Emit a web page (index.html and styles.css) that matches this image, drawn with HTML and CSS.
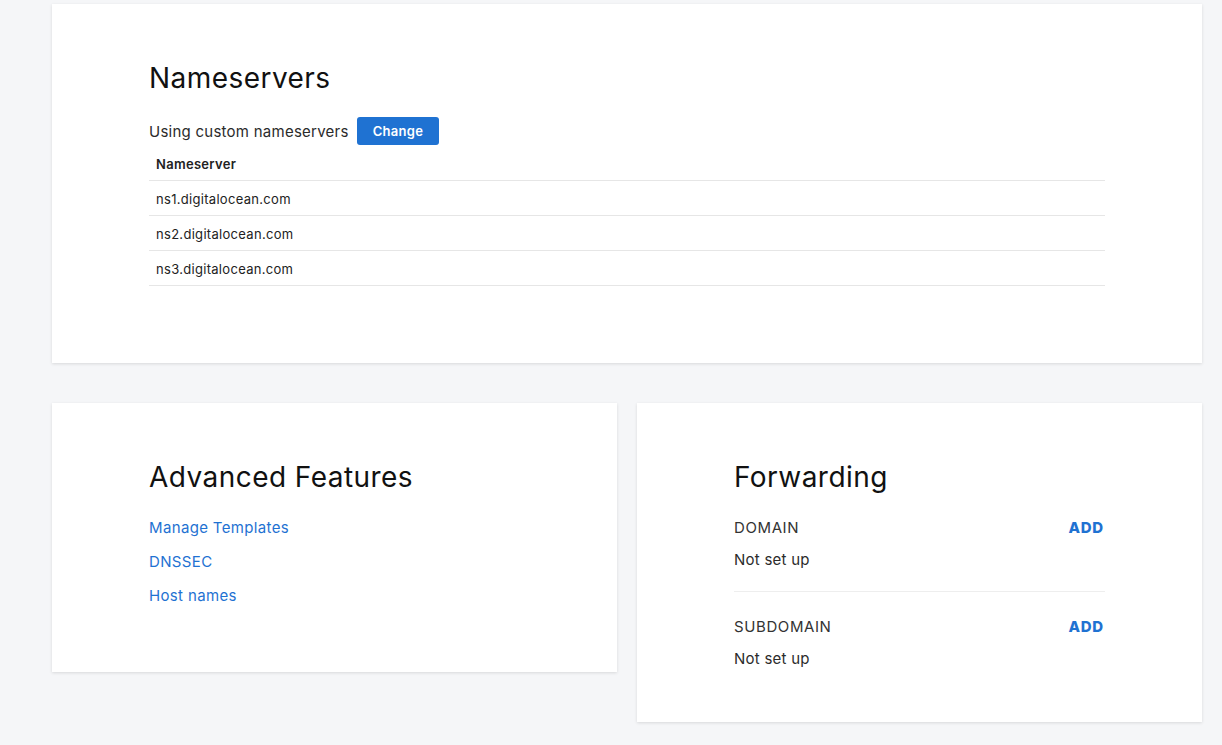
FILE: index.html
```html
<!DOCTYPE html>
<html>
<head>
<meta charset="utf-8">
<link rel="stylesheet" href="styles.css">
</head>
<body>
<main class="page">
  <section class="card card-wide">
    <h2 class="card-title">Nameservers</h2>
    <div class="ns-using">
      <span>Using custom nameservers</span>
      <button class="btn-primary">Change</button>
    </div>
    <table class="ns-table">
      <thead><tr><th>Nameserver</th></tr></thead>
      <tbody>
        <tr><td>ns1.digitalocean.com</td></tr>
        <tr><td>ns2.digitalocean.com</td></tr>
        <tr><td>ns3.digitalocean.com</td></tr>
      </tbody>
    </table>
  </section>
  <div class="row">
    <section class="card card-half card-adv">
      <h2 class="card-title">Advanced Features</h2>
      <ul class="links">
        <li><a href="#">Manage Templates</a></li>
        <li><a href="#">DNSSEC</a></li>
        <li><a href="#">Host names</a></li>
      </ul>
    </section>
    <section class="card card-half card-fwd">
      <h2 class="card-title">Forwarding</h2>
      <div class="fwd-section">
        <div class="fwd-head"><span class="fwd-label">DOMAIN</span><a href="#" class="fwd-add">ADD</a></div>
        <div class="fwd-value">Not set up</div>
      </div>
      <div class="fwd-section">
        <div class="fwd-head"><span class="fwd-label">SUBDOMAIN</span><a href="#" class="fwd-add">ADD</a></div>
        <div class="fwd-value">Not set up</div>
      </div>
    </section>
  </div>
</main>
</body>
</html>
```
FILE: styles.css
```css
* { box-sizing: border-box; }
html, body { margin: 0; padding: 0; }
body {
  background: #f5f6f8;
  font-family: Inter, "Noto Sans", sans-serif;
  color: #2b2b2b;
}
.page {
  padding: 4px 20px 24px 52px;
  display: flex;
  flex-direction: column;
  gap: 40px;
}
.card {
  background: #fff;
  box-shadow: 0 1px 3px rgba(0,0,0,0.12);
  padding: 56px 97px 0 97px;
}
.card-wide { height: 359px; }
.card-title {
  margin: 0;
  font-size: 28px;
  line-height: 36px;
  font-weight: 400;
  color: #111;
  letter-spacing: 0.45px;
}
.ns-using {
  margin-top: 21px;
  display: flex;
  align-items: center;
  gap: 8px;
  font-size: 15px;
  letter-spacing: 0.25px;
  color: #2b2b2b;
}
.btn-primary {
  background: #1f72d2;
  color: #fff;
  border: 0;
  border-radius: 3px;
  height: 28px;
  padding: 0 16px;
  font-family: inherit;
  font-size: 13px;
  font-weight: 600;
  letter-spacing: 0.3px;
}
.ns-table {
  width: 100%;
  border-collapse: collapse;
  font-size: 13px;
  letter-spacing: 0.3px;
}
.ns-table th {
  text-align: left;
  font-weight: 600;
  height: 35px;
  padding: 4px 7px 0;
  color: #222;
  border-bottom: 1px solid #e6e6e6;
}
.ns-table td {
  height: 35px;
  padding: 2px 7px 0;
  border-bottom: 1px solid #e6e6e6;
  color: #222;
}
.row {
  display: flex;
  gap: 20px;
  align-items: flex-start;
}
.card-half { flex: 1; }
.card-adv { height: 269px; }
.card-fwd { height: 319px; }
.links {
  list-style: none;
  margin: 16px 0 0;
  padding: 0;
}
.links li { line-height: 34px; font-size: 15px; letter-spacing: 0.35px; }
.links a { color: #1f72d2; text-decoration: none; }
.fwd-section { padding: 21px 0 19px; }
.fwd-section + .fwd-section { border-top: 1px solid #eee; padding-top: 23px; }
.fwd-head {
  display: flex;
  justify-content: space-between;
  align-items: center;
  line-height: 24px;
}
.fwd-label { font-size: 15px; letter-spacing: 0.6px; color: #333; }
.fwd-add { color: #1f72d2; font-weight: 800; font-size: 15px; letter-spacing: 0.8px; margin-right: 1px; text-decoration: none; }
.fwd-value { margin-top: 8px; font-size: 15px; line-height: 24px; letter-spacing: 0.25px; color: #2b2b2b; }
```
